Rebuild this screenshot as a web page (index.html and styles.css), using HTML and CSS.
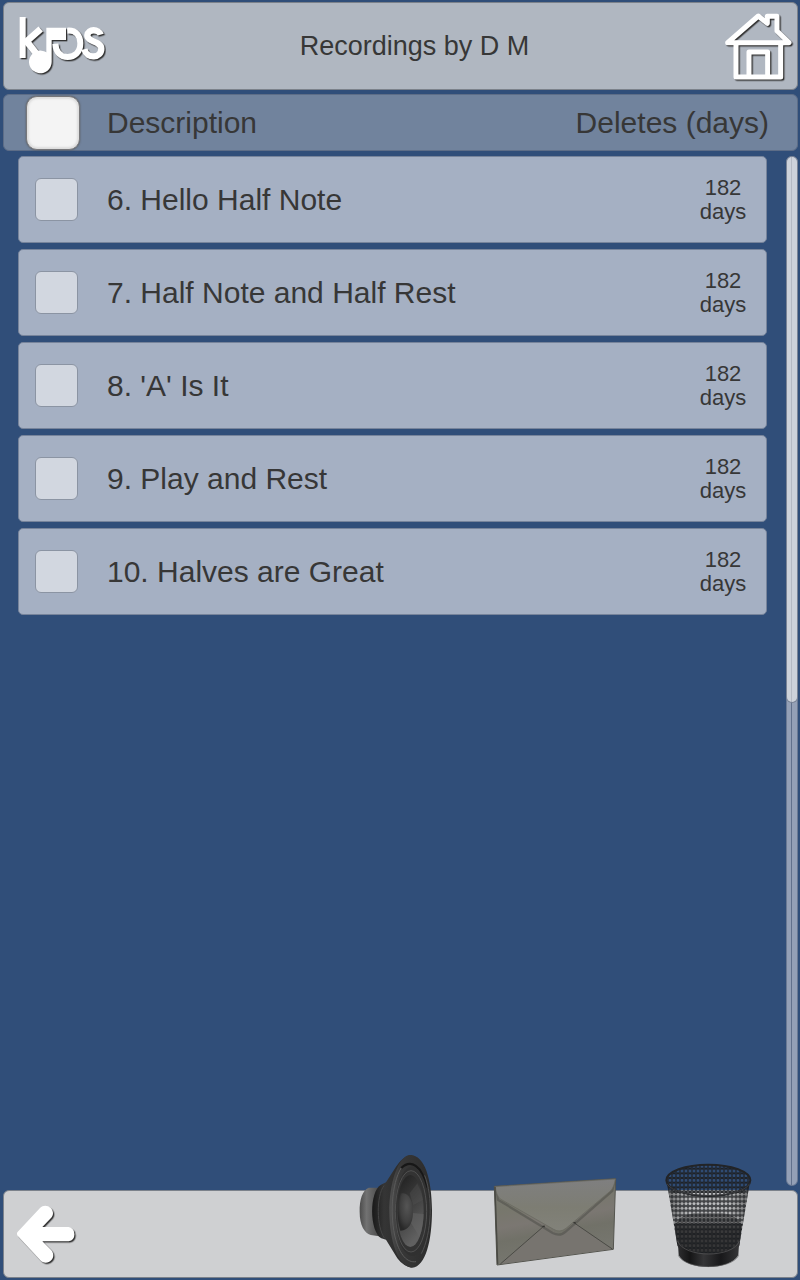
FILE: index.html
```html
<!DOCTYPE html>
<html lang="en">
<head>
<meta charset="utf-8">
<meta name="viewport" content="width=device-width, initial-scale=1">
<title>Recordings by D M</title>
<link rel="stylesheet" href="styles.css">
</head>
<body>
<div class="app">
  <header class="panel topbar">
    <svg class="logo" viewBox="54 42 264 192" role="img" aria-label="kjos">
      <g class="drop" fill="none" stroke="#fff" stroke-width="18">
        <path d="M68 51V174"/>
        <path d="M122 87L80 124L110 162" stroke-width="20"/>
        <path d="M202 92C229 90 241 108 241 130C241 158 223 171 203 171C182 171 168 158 166 131"/>
        <path d="M302 104C297 87 264 85 262 106C262 127 304 123 304 146C304 174 261 179 253 148" stroke-width="19"/>
        <path d="M139 83H198V120H155V186A34 34 0 1 1 139 157Z" fill="#fff" stroke="none"/>
      </g>
    </svg>
    <h1 class="title">Recordings by D M</h1>
    <button class="icon-button" type="button" aria-label="Home">
      <svg class="home" viewBox="69 24 216 222" aria-hidden="true">
        <g class="drop" fill="none" stroke="#fff" stroke-width="15" stroke-linejoin="round" stroke-linecap="round">
          <path d="M83 125L175 45L202 67V46H231V90L267 125Z"/>
          <path d="M108 128V228H242V128"/>
          <path d="M147 226V153H203V226"/>
        </g>
      </svg>
    </button>
  </header>

  <div class="panel columns">
    <input class="check check-all" type="checkbox" aria-label="Select all recordings">
    <span class="column-name">Description</span>
    <span>Deletes (days)</span>
  </div>

  <main class="content">
    <ul class="list">
      <li class="row"><input class="check" type="checkbox" id="r6"><label class="name" for="r6">6. Hello Half Note</label><span class="days">182 days</span></li>
      <li class="row"><input class="check" type="checkbox" id="r7"><label class="name" for="r7">7. Half Note and Half Rest</label><span class="days">182 days</span></li>
      <li class="row"><input class="check" type="checkbox" id="r8"><label class="name" for="r8">8. 'A' Is It</label><span class="days">182 days</span></li>
      <li class="row"><input class="check" type="checkbox" id="r9"><label class="name" for="r9">9. Play and Rest</label><span class="days">182 days</span></li>
      <li class="row"><input class="check" type="checkbox" id="r10"><label class="name" for="r10">10. Halves are Great</label><span class="days">182 days</span></li>
    </ul>
    <div class="track"><div class="thumb"></div></div>
  </main>

  <footer class="panel bottombar">
    <button class="icon-button back" type="button" aria-label="Back">
      <svg class="arrow" viewBox="42 66 198 192" aria-hidden="true">
        <path class="drop" d="M52 157L120 84C134 70 158 80 159 99C159 106 157 110 153 114L127 141H206A22 22 0 0 1 206 184H127L154 211C167 226 157 248 137 248C130 248 125 245 121 241L54 169Q49 162 52 157Z" fill="#fff"/>
      </svg>
    </button>
    <div class="tools">
      <button class="icon-button" type="button" aria-label="Play">
        <svg class="tool" viewBox="-66 21 468 375" aria-hidden="true">
          <defs>
            <linearGradient id="magnet" x1="0" x2="1"><stop offset="0" stop-color="#4c4c4c"/><stop offset=".35" stop-color="#727272"/><stop offset="1" stop-color="#494949"/></linearGradient>
            <linearGradient id="basket" x1="0" x2="1"><stop offset="0" stop-color="#191919"/><stop offset=".3" stop-color="#353535"/><stop offset="1" stop-color="#262626"/></linearGradient>
            <linearGradient id="rim" x1="0" x2="1"><stop offset="0" stop-color="#505050"/><stop offset=".25" stop-color="#383838"/><stop offset="1" stop-color="#2b2b2b"/></linearGradient>
            <linearGradient id="cone" x1="0" y1="0" x2=".4" y2="1"><stop offset="0" stop-color="#1d1d1d"/><stop offset=".5" stop-color="#3c3c3c"/><stop offset="1" stop-color="#606060"/></linearGradient>
            <radialGradient id="dome" cx=".6" cy=".35" r=".65"><stop offset="0" stop-color="#555"/><stop offset=".65" stop-color="#3f3f3f"/><stop offset="1" stop-color="#282828"/></radialGradient>
          </defs>
          <path d="M115 128H86C68 135 58 163 59 201C59 240 73 264 92 270L118 274Z" fill="url(#magnet)"/>
          <path d="M123 119C87 139 88 258 124 280L138 284L172 340Q190 364 215 368V30C194 32 180 47 167 67L138 112Z" fill="url(#basket)"/>
          <path d="M132 122C108 154 110 246 133 279" fill="none" stroke="#444" stroke-width="3"/>
          <path d="M211 30C255 31 275 102 276 196C276 286 257 366 217 368C173 367 149 286 148 202C147 119 174 30 211 30Z" fill="url(#rim)"/>
          <path d="M184 68C154 116 149 216 167 283C180 330 202 354 228 350" fill="none" stroke="#5b5b5b" stroke-width="3"/>
          <path d="M184 69C211 43 247 58 258 129" fill="none" stroke="#171717" stroke-width="7"/>
          <ellipse cx="216" cy="199" rx="51" ry="134" fill="#303030"/>
          <ellipse cx="213" cy="199" rx="47" ry="122" fill="#333" stroke="#505050" stroke-width="3"/>
          <ellipse cx="211" cy="198" rx="40" ry="108" fill="url(#cone)"/>
          <path d="M211 230L238 276Q250 246 251 207L218 204Z" fill="#666" opacity=".5"/>
          <path d="M209 145L232 115Q244 137 249 165L220 180Z" fill="#5a5a5a" opacity=".3"/>
          <path d="M182 146C205 139 219 168 219 202C219 237 203 258 181 257C170 220 171 181 182 146Z" fill="url(#dome)"/>
          <path d="M254 91C279 154 276 264 244 326" fill="none" stroke="#505050" stroke-width="3"/>
        </svg>
      </button>
      <button class="icon-button" type="button" aria-label="Send">
        <svg class="tool" viewBox="-18 -39 468 375" aria-hidden="true">
          <defs>
            <linearGradient id="paper" x1="0" y1="0" x2=".25" y2="1"><stop offset="0" stop-color="#7b7b75"/><stop offset=".35" stop-color="#77776c"/><stop offset=".55" stop-color="#7b7772"/><stop offset=".7" stop-color="#717168"/><stop offset="1" stop-color="#777770"/></linearGradient>
            <linearGradient id="flap" x1="0" y1="0" x2="0" y2="1"><stop offset="0" stop-color="#7f7f80"/><stop offset=".55" stop-color="#7d7d73"/><stop offset="1" stop-color="#82827a"/></linearGradient>
          </defs>
          <path d="M43 64L407 41L400 253L51 300Z" fill="url(#paper)" stroke="#55554f" stroke-width="3"/>
          <path d="M61 297L191 184L239 210L283 174L397 252Z" fill="#77746f"/>
          <path d="M61 297L191 184M283 174L397 252" fill="none" stroke="#4a4a45" stroke-width="3"/>
          <path d="M48 66L54 104L218 204Q240 216 258 199L397 78L404 43" fill="none" stroke="#54544e" stroke-width="7" opacity=".65"/>
          <path d="M46 65L406 42Q402 68 391 78L258 190Q240 204 221 193L61 102Q49 92 46 65Z" fill="url(#flap)" stroke="#66665e" stroke-width="2"/>
          <path d="M184 186L193 181L195 187ZM278 173L286 170L288 177Z" fill="#343431"/>
          <path d="M45 66L53 297" stroke="#494943" stroke-width="4"/>
        </svg>
      </button>
      <button class="icon-button" type="button" aria-label="Delete">
        <svg class="tool" viewBox="-60 6 468 375" aria-hidden="true">
          <defs>
            <pattern id="mesh" width="12" height="14" patternUnits="userSpaceOnUse"><path d="M0 0L6 3.5L12 0M0 14L6 10.5L12 14M6 3.5V10.5M0 -2V2M12 -2V2" fill="none" stroke="#1d1f22" stroke-width="3.4"/></pattern>
            <pattern id="glints" width="12" height="14" patternUnits="userSpaceOnUse"><path d="M4 7H8M-2 0H2M10 0H14M-2 14H2M10 14H14" stroke="#aaa" stroke-width="2.4"/></pattern>
            <linearGradient id="side" x1="0" x2="1"><stop offset="0" stop-color="#111" stop-opacity=".5"/><stop offset=".25" stop-color="#222" stop-opacity=".1"/><stop offset=".75" stop-color="#222" stop-opacity=".1"/><stop offset="1" stop-color="#111" stop-opacity=".5"/></linearGradient>
            <linearGradient id="shade" x1="0" y1="0" x2="0" y2="1"><stop offset="0" stop-color="#3c3c3d" stop-opacity=".6"/><stop offset=".4" stop-color="#2c2c2d" stop-opacity=".9"/><stop offset="1" stop-color="#343435"/></linearGradient>
            <linearGradient id="base" x1="0" x2="1"><stop offset="0" stop-color="#2e2e30"/><stop offset=".2" stop-color="#151516"/><stop offset=".42" stop-color="#353537"/><stop offset=".7" stop-color="#18181a"/><stop offset="1" stop-color="#363638"/></linearGradient>
          </defs>
          <ellipse cx="175" cy="90" rx="126" ry="46" fill="url(#mesh)"/>
          <path d="M51 100C70 146 280 146 299 100L268 286C253 324 98 324 82 286Z" fill="url(#side)"/>
          <path d="M74 226Q92 193 132 190H220Q258 194 276 226L268 286C253 324 98 324 82 286Z" fill="url(#shade)"/>
          <path d="M51 100C70 146 280 146 299 100L268 286C253 324 98 324 82 286Z" fill="url(#mesh)"/>
          <path d="M56 120C82 146 268 146 294 120L279 220H71Z" fill="url(#glints)"/>
          <path d="M83 267C98 325 253 325 268 267L265 315C240 363 108 363 86 315Z" fill="url(#base)"/>
          <path d="M83 273C102 325 250 325 268 273M85 316C107 361 244 361 266 316" fill="none" stroke="#5a5a5c" stroke-width="2"/>
          <ellipse cx="175" cy="91" rx="126" ry="47" fill="none" stroke="#222427" stroke-width="6"/>
          <path d="M51 101C76 148 274 148 299 101" fill="none" stroke="#4b4c4f" stroke-width="2"/>
        </svg>
      </button>
    </div>
  </footer>
</div>
</body>
</html>
```
FILE: styles.css
```css
* {
  box-sizing: border-box;
}

body {
  margin: 0;
  background: #304e79;
  color: #373737;
  font-family: "Liberation Sans", Arial, sans-serif;
  font-size: 30px;
  line-height: 36px;
}

.app {
  display: flex;
  flex-direction: column;
  gap: 4px;
  min-height: 100vh;
  padding: 2px 2px 2px 3px;
}

.panel {
  display: flex;
  align-items: center;
  border: 1px solid #7c828b;
  border-radius: 6px;
}

.topbar {
  justify-content: space-between;
  height: 88px;
  padding: 0 2px 0 14px;
  background: #b0b7c1;
}

.title {
  margin: 0;
  font-size: 27px;
  font-weight: 400;
}

.icon-button {
  display: block;
  padding: 0;
  border: 0;
  background: none;
  cursor: pointer;
}

svg {
  display: block;
}

.drop {
  filter: drop-shadow(4px 4px 1px #333);
}

.logo {
  width: 88px;
  height: 64px;
}

.home {
  width: 72px;
  height: 74px;
}

.columns {
  height: 57px;
  padding: 0 28px 0 22px;
  border-color: #5d6d87;
  background: #71839d;
}

.column-name {
  flex: 1;
}

.check {
  appearance: none;
  flex: none;
  width: 43px;
  height: 43px;
  margin: 0 29px 0 0;
  border: 1px solid #8b94a3;
  border-radius: 6px;
  background: #d2d7e0;
}

.check:checked {
  background: #304e79;
}

.check-all {
  width: 54px;
  height: 54px;
  margin-right: 27px;
  border: 1px solid #77777a;
  border-radius: 11px;
  background: #f4f4f4;
  box-shadow: inset 0 0 2px 2px #ddd, 0 0 2px #555;
}

.content {
  display: flex;
  flex: 1;
  gap: 19px;
  padding: 1px 0 0 15px;
}

.list {
  display: flex;
  flex: 1;
  flex-direction: column;
  gap: 6px;
  margin: 0;
  padding: 0;
  list-style: none;
}

.row {
  display: flex;
  align-items: center;
  height: 87px;
  padding: 0 16px;
  border: 1px solid #77849b;
  border-radius: 5px;
  background: #a5b0c3;
}

.name {
  flex: 1;
}

.days {
  width: 54px;
  font-size: 22px;
  line-height: 24px;
  text-align: center;
}

.track {
  width: 12px;
  border: 1px solid #6b7a94;
  border-radius: 6px;
  background: linear-gradient(90deg, #94a0b6 45%, #62718c 45% 55%, #94a0b6 55%);
}

.thumb {
  height: 53%;
  border-radius: 5px;
  background: linear-gradient(90deg, #cdd2da 45%, #b5bac4 45% 55%, #cdd2da 55%);
  box-shadow: 0 0 0 1px #7a8496;
}

.bottombar {
  justify-content: space-between;
  height: 88px;
  padding: 0 11px 0 10px;
  background: #cfd0d2;
}

.arrow {
  width: 66px;
  height: 64px;
}

.tools {
  display: flex;
  align-self: flex-end;
}

.tool {
  width: 156px;
  height: 125px;
}
```
